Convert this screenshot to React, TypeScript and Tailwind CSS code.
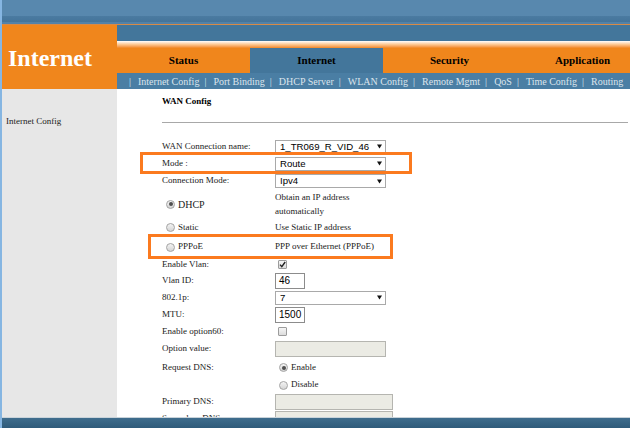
import React from 'react';

const tabs = [
  { name: 'Status', active: false },
  { name: 'Internet', active: true },
  { name: 'Security', active: false },
  { name: 'Application', active: false },
];

const subNav = [
  'Internet Config',
  'Port Binding',
  'DHCP Server',
  'WLAN Config',
  'Remote Mgmt',
  'QoS',
  'Time Config',
  'Routing',
];

function Select({ value, width = 'w-[111px]' }: { value: string; width?: string }) {
  return (
    <div
      className={`${width} flex h-[14px] items-center justify-between border border-[#a9a9a9] bg-white pl-[4px] pr-[3px] font-['Liberation_Sans',sans-serif] text-[9.6px] leading-none text-black`}
    >
      <span>{value}</span>
      <svg width="5" height="5" viewBox="0 0 6 6" className="shrink-0">
        <path d="M0 0.5 L6 0.5 L3 5.5 Z" fill="#111" />
      </svg>
    </div>
  );
}

function TextBox({ value = '', width, disabled }: { value?: string; width: string; disabled?: boolean }) {
  return (
    <div
      className={`${width} flex h-[16px] items-center border pl-[3px] font-['Liberation_Sans',sans-serif] text-[10px] leading-none text-black ${
        disabled ? 'border-[#b5b5b0] bg-[#ebebe4]' : 'border-[#8c8c8c] bg-white'
      }`}
    >
      {value}
    </div>
  );
}

function Radio({ checked }: { checked?: boolean }) {
  return (
    <span className="flex h-[9px] w-[9px] shrink-0 items-center justify-center rounded-full border border-[#a3a3a3] bg-gradient-to-b from-[#f4f4f4] to-[#d4d4d4]">
      {checked && <span className="h-[4px] w-[4px] rounded-full bg-[#4f4f4f]" />}
    </span>
  );
}

function Checkbox({ checked }: { checked?: boolean }) {
  return (
    <span className="flex h-[9px] w-[9px] items-center justify-center rounded-[1px] border border-[#9c9c9c] bg-gradient-to-b from-[#f6f6f6] to-[#dcdcdc]">
      {checked && (
        <svg width="7" height="7" viewBox="0 0 7 7">
          <path d="M1 3.6 L2.8 5.6 L6.2 1" stroke="#222" strokeWidth="1.4" fill="none" />
        </svg>
      )}
    </span>
  );
}

function Row({ label, h = 'h-[17px]', children }: { label: React.ReactNode; h?: string; children?: React.ReactNode }) {
  return (
    <div className={`flex ${h} items-center`}>
      <div className="flex w-[113px] items-center">{label}</div>
      <div className="flex items-center">{children}</div>
    </div>
  );
}

export default function App() {
  return (
    <div className="relative flex h-[428px] w-[630px] flex-col overflow-hidden border-l-2 border-[#86b6e2] bg-white font-['Liberation_Serif',serif]">
      {/* top bar */}
      <div className="h-[16px] bg-[#5888ae]" />
      <div className="h-[6px] bg-gradient-to-b from-[#4b7ba1] to-[#44749a]" />
      <div className="h-[2px] bg-[#5382a8]" />
      <div className="h-[1px] bg-[#d98a45]" />

      {/* header */}
      <div className="flex h-[64px]">
        <div className="flex w-[115px] shrink-0 items-center bg-[#f0861c] pl-[6px] pt-[2px] text-[24px] font-bold text-white">
          Internet
        </div>
        <div className="flex min-w-0 flex-1 flex-col overflow-hidden">
          <div className="h-[16px] bg-[#43769b]" />
          <div className="h-[7px] bg-gradient-to-b from-white via-[#fcc790] to-[#f0861c]" />
          <div className="flex h-[25px]">
            {tabs.map((t) => (
              <div
                key={t.name}
                className={`flex w-[133px] shrink-0 items-center justify-center text-[11px] font-bold text-black ${
                  t.active ? 'bg-[#43769b]' : 'bg-[#f0861c]'
                }`}
              >
                {t.name}
              </div>
            ))}
          </div>
          <div className="flex h-[16px] items-center whitespace-nowrap bg-[#4a7ea4] pl-[12px] text-[10px] text-[#dbe4ec]">
            {subNav.map((s) => (
              <React.Fragment key={s}>
                <span>|</span>
                <span className="ml-[7px] mr-[5px]">{s}</span>
              </React.Fragment>
            ))}
          </div>
        </div>
      </div>

      {/* body */}
      <div className="flex min-h-0 flex-1">
        <div className="w-[115px] shrink-0 bg-[#e7e7e7] pl-[4px] pt-[26px] text-[9px] text-[#222]">Internet Config</div>
        <div className="min-h-0 min-w-0 flex-1 overflow-hidden pl-[45px] pt-[6px] text-[9px] text-[#222]">
          <div className="h-[12px] font-bold leading-[12px] text-black">WAN Config</div>
          <div className="mt-[15px] h-[1px] w-[466px] bg-[#a8a8a8]" />
          <div className="mt-[15px] flex flex-col">
            <Row label="WAN Connection name:">
              <Select value="1_TR069_R_VID_46" />
            </Row>
            <Row label="Mode :">
              <Select value="Route" />
            </Row>
            <Row label="Connection Mode:" h="h-[18px]">
              <Select value="Ipv4" />
            </Row>
            <Row
              h="h-[28px]"
              label={
                <div className="flex items-center pl-[4px]">
                  <Radio checked />
                  <span className="ml-[3px] text-[10px]">DHCP</span>
                </div>
              }
            >
              <div className="flex flex-col leading-[14px]">
                <span>Obtain an IP address</span>
                <span>automatically</span>
              </div>
            </Row>
            <Row
              h="h-[19px]"
              label={
                <div className="flex items-center pl-[4px]">
                  <Radio />
                  <span className="ml-[3px]">Static</span>
                </div>
              }
            >
              <span>Use Static IP address</span>
            </Row>
            <Row
              h="h-[20px]"
              label={
                <div className="flex items-center pl-[4px]">
                  <Radio />
                  <span className="ml-[3px]">PPPoE</span>
                </div>
              }
            >
              <span>PPP over Ethernet (PPPoE)</span>
            </Row>
            <Row label="Enable Vlan:" h="h-[15px]">
              <span className="ml-[3px]">
                <Checkbox checked />
              </span>
            </Row>
            <Row label="Vlan ID:">
              <TextBox value="46" width="w-[30px]" />
            </Row>
            <Row label="802.1p:">
              <Select value="7" />
            </Row>
            <Row label="MTU:">
              <TextBox value="1500" width="w-[30px]" />
            </Row>
            <Row label="Enable option60:">
              <span className="ml-[3px]">
                <Checkbox />
              </span>
            </Row>
            <Row label="Option value:" h="h-[18px]">
              <TextBox width="w-[111px]" disabled />
            </Row>
            <Row label="Request DNS:" h="h-[19px]">
              <div className="flex items-center pl-[4px]">
                <Radio checked />
                <span className="ml-[3px]">Enable</span>
              </div>
            </Row>
            <Row label="" h="h-[16px]">
              <div className="flex items-center pl-[4px]">
                <Radio />
                <span className="ml-[3px]">Disable</span>
              </div>
            </Row>
            <Row label="Primary DNS:">
              <TextBox width="w-[118px]" disabled />
            </Row>
            <Row label="Secondary DNS:">
              <TextBox width="w-[118px]" disabled />
            </Row>
          </div>
        </div>
      </div>

      {/* bottom bar */}
      <div className="h-[1px] bg-[#c9d3da]" />
      <div className="h-[10px] bg-gradient-to-b from-[#3f6d8d] to-[#2f5b7a]" />

      {/* annotation boxes */}
      <div className="absolute left-[138px] top-[152px] h-[22px] w-[272px] border-[3px] border-[#fb7a1f]" />
      <div className="absolute left-[146px] top-[234px] h-[25px] w-[245px] border-[3px] border-[#fb7a1f]" />
    </div>
  );
}
